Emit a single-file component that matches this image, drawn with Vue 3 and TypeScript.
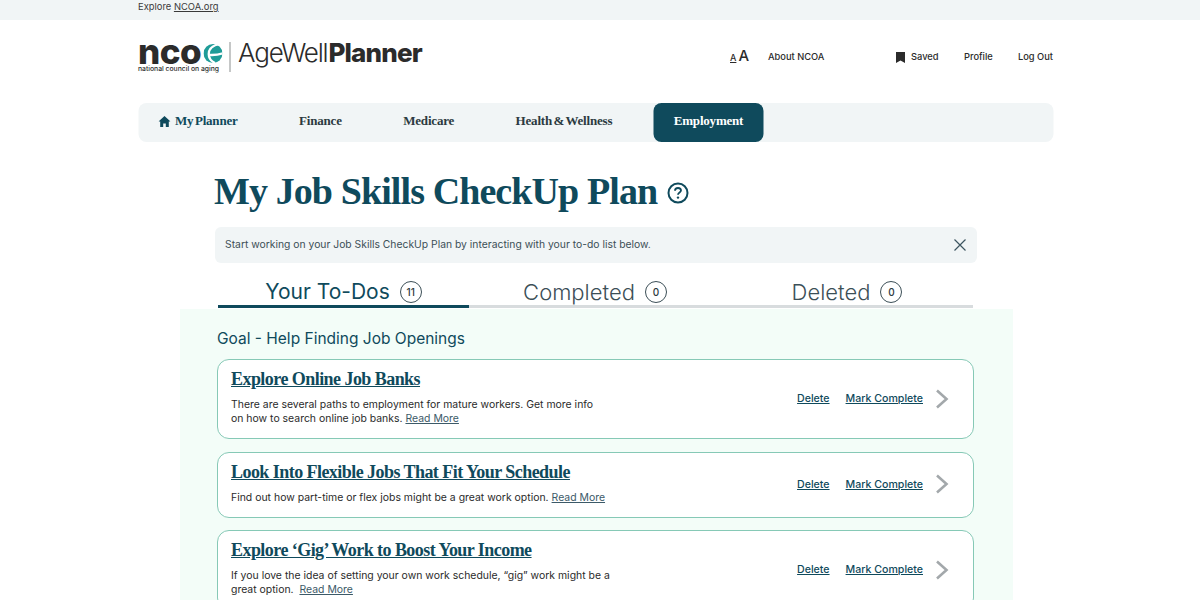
<script setup lang="ts">
interface NavItem {
  label: string;
  home?: boolean;
  active?: boolean;
}

interface Tab {
  label: string;
  count: number;
  active?: boolean;
}

interface Todo {
  title: string;
  lines: string[];
  more: string;
}

const navItems: NavItem[] = [
  { label: 'My Planner', home: true },
  { label: 'Finance' },
  { label: 'Medicare' },
  { label: 'Health & Wellness' },
  { label: 'Employment', active: true }
];

const tabs: Tab[] = [
  { label: 'Your To-Dos', count: 11, active: true },
  { label: 'Completed', count: 0 },
  { label: 'Deleted', count: 0 }
];

const todos: Todo[] = [
  {
    title: 'Explore Online Job Banks',
    lines: ['There are several paths to employment for mature workers. Get more info', 'on how to search online job banks.'],
    more: 'Read More'
  },
  {
    title: 'Look Into Flexible Jobs That Fit Your Schedule',
    lines: ['Find out how part-time or flex jobs might be a great work option.'],
    more: 'Read More'
  },
  {
    title: 'Explore ‘Gig’ Work to Boost Your Income',
    lines: ['If you love the idea of setting your own work schedule, “gig” work might be a', 'great option.\u00a0'],
    more: 'Read More'
  }
];
</script>

<template>
  <div class="page">
    <div class="topbar">
      <div class="wrap">Explore <a class="toplink">NCOA.org</a></div>
    </div>

    <header class="wrap header">
      <div class="logo">
        <div class="logo-ncoa">
          <div class="logo-mark">
            <span class="logo-nco">nco</span>
            <svg class="logo-swirl" viewBox="0 0 20 20" width="19" height="19">
              <circle cx="10" cy="10" r="10" fill="#1f9c98" />
              <path d="M17 0C10 1.500 5.500 5 5.500 10.500S8 18 12 20" fill="none" stroke="#fff" stroke-width="2.400" />
              <path d="M6 11.500C10 11.800 15 11.500 20.500 9.800" fill="none" stroke="#fff" stroke-width="2.600" />
            </svg>
          </div>
          <div class="logo-sub">national council on aging</div>
        </div>
        <span class="logo-rule"></span>
        <div class="logo-product"><span class="age">AgeWell</span><b>Planner</b></div>
      </div>

      <div class="utility">
        <span class="font-size"><span class="small-a">A</span><span class="big-a">A</span></span>
        <span class="about">About NCOA</span>
        <span class="saved">
          <svg viewBox="0 0 10 11" width="10" height="11"><path d="M.5 0H9.500V11L5 8.500.5 11Z" fill="#2b2b2b" /></svg>
          Saved
        </span>
        <span class="profile">Profile</span>
        <span class="logout">Log Out</span>
      </div>
    </header>

    <nav class="wrap nav">
      <a v-for="item in navItems" :key="item.label" class="nav-item" :class="{ active: item.active, home: item.home }">
        <svg v-if="item.home" viewBox="0 0 12 11" width="12" height="11">
          <path d="M6 0 12 5.500H10.300V11H7.300V7.500H4.700V11H1.700V5.500H0Z" fill="#0f4a5c" />
        </svg>
        <span>{{ item.label }}</span>
      </a>
    </nav>

    <h1 class="title">
      <span>My Job Skills CheckUp Plan</span>
      <svg viewBox="0 0 22 22" width="22" height="22" class="help">
        <circle cx="11" cy="11" r="9.500" fill="none" stroke="#0f4a5c" stroke-width="2" />
        <path d="M8 8.700C8 7 9.300 6 11 6S14 7 14 8.600C14 10.500 11 10.600 11 12.700" fill="none" stroke="#0f4a5c" stroke-width="1.800" />
        <circle cx="11" cy="15.600" r="1.200" fill="#0f4a5c" />
      </svg>
    </h1>

    <div class="notice">
      <span>Start working on your Job Skills CheckUp Plan by interacting with your to-do list below.</span>
      <svg viewBox="0 0 12 12" width="12" height="12">
        <path d="M.5.500 11.500 11.500M11.500.500 .5 11.500" stroke="#3d5560" stroke-width="1.200" fill="none" />
      </svg>
    </div>

    <div class="tabs">
      <div v-for="tab in tabs" :key="tab.label" class="tab" :class="{ active: tab.active }">
        <span class="tab-label">{{ tab.label }}</span>
        <span class="tab-count">{{ tab.count }}</span>
      </div>
    </div>

    <section class="panel">
      <h2 class="goal">Goal - Help Finding Job Openings</h2>
      <article v-for="todo in todos" :key="todo.title" class="card">
        <div class="card-body">
          <a class="card-title">{{ todo.title }}</a>
          <p class="card-text">
            <template v-for="(line, i) in todo.lines" :key="i">
              {{ line }}<br v-if="i < todo.lines.length - 1" />
            </template>
            {{ ' ' }}<a class="more">{{ todo.more }}</a>
          </p>
        </div>
        <div class="card-actions">
          <a class="delete">Delete</a>
          <a class="complete">Mark Complete</a>
          <svg viewBox="0 0 14 20" width="14" height="20">
            <path d="M2 1.500 11.500 10 2 18.500" fill="none" stroke="#a3a8ab" stroke-width="2.600" />
          </svg>
        </div>
      </article>
    </section>
  </div>
</template>

<style>
html,
body {
  margin: 0;
  background: #fff;
  overflow: hidden;
}
</style>

<style scoped>
.page {
  height: 600px;
  overflow: hidden;
  font-family: Inter, "Noto Sans", sans-serif;
  color: #2b2b2b;
}

.wrap {
  width: 915px;
  margin: 0 auto;
  box-sizing: border-box;
  transform: translateX(-4.500px);
}

.topbar {
  height: 20px;
  background: #f1f5f6;
  font-size: 9.400px;
  line-height: 13px;
  color: #3a3a3a;
}

.toplink {
  text-decoration: underline;
}

.header {
  height: 83px;
  display: flex;
  justify-content: space-between;
  align-items: flex-start;
}

.logo {
  display: flex;
  align-items: flex-start;
  padding-top: 22px;
}

.logo-ncoa {
  width: 82px;
}

.logo-mark {
  display: flex;
  align-items: center;
  height: 22px;
}

.logo-nco {
  font-size: 35px;
  line-height: 22px;
  font-weight: 800;
  letter-spacing: -0.500px;
  color: #2b2b2b;
  transform: translateY(-2px);
}

.logo-swirl {
  margin-left: 2px;
  flex-shrink: 0;
}

.logo-sub {
  font-size: 6.800px;
  line-height: 8px;
  margin-top: 1px;
  font-weight: 500;
  white-space: nowrap;
}

.logo-rule {
  width: 1px;
  height: 30px;
  background: #8b8f90;
  margin: 0 8px 0 9px;
}

.logo-product {
  font-size: 26px;
  line-height: 22px;
  letter-spacing: -1.200px;
  white-space: nowrap;
}

.logo-product .age {
  font-weight: 300;
}

.logo-product b {
  font-weight: 800;
  margin-left: 1px;
  letter-spacing: -0.800px;
}

.utility {
  display: flex;
  align-items: center;
  font-size: 9.300px;
  font-weight: 500;
  line-height: 14px;
  padding-top: 29px;
}

.font-size {
  display: flex;
  align-items: baseline;
  gap: 2px;
  width: 38px;
}

.small-a {
  font-size: 9px;
  text-decoration: underline;
}

.big-a {
  font-size: 15px;
}

.about {
  width: 127px;
}

.saved {
  display: flex;
  align-items: center;
  gap: 6px;
  width: 69px;
}

.profile {
  width: 54px;
}

.nav {
  height: 39px;
  background: #f1f5f6;
  border-radius: 8px;
  display: flex;
  align-items: stretch;
  padding-left: 20px;
  font-family: "Liberation Serif", serif;
  font-size: 13px;
  font-weight: 700;
  letter-spacing: -0.200px;
  word-spacing: -1.500px;
}

.nav-item {
  display: flex;
  align-items: center;
  gap: 5px;
  margin-right: 61.500px;
  padding-bottom: 3px;
  color: #2c3a40;
  white-space: nowrap;
}

.nav-item.home {
  color: #0f4a5c;
}

.nav-item.active {
  margin: 0 0 0 -20px;
  padding: 0 20px 3px;
  border-radius: 8px;
  background: #0f4a5c;
  color: #fff;
}

.title {
  margin: 20px 0 0 214px;
  height: 65px;
  padding-bottom: 8px;
  box-sizing: border-box;
  display: flex;
  align-items: center;
  gap: 10px;
  font-family: "Liberation Serif", serif;
  font-size: 38px;
  line-height: 44px;
  font-weight: 700;
  letter-spacing: -0.900px;
  color: #0f4a5c;
  white-space: nowrap;
}

.help {
  margin-top: 4px;
}

.notice {
  width: 762px;
  height: 36px;
  margin: 0 0 0 215px;
  box-sizing: border-box;
  padding: 0 11px 0 10px;
  background: #f1f5f6;
  border-radius: 6px;
  display: flex;
  align-items: center;
  justify-content: space-between;
  font-size: 10.350px;
  color: #3c4f57;
}

.notice span {
  padding-bottom: 3px;
}

.tabs {
  width: 755px;
  height: 45px;
  margin: 0 0 0 218px;
  display: grid;
  grid-template-columns: 251px 1fr 252px;
}

.tab {
  display: flex;
  align-items: center;
  justify-content: center;
  gap: 10px;
  box-sizing: border-box;
  padding-top: 15px;
  border-bottom: 3px solid #d8dcde;
  font-size: 22px;
  font-weight: 300;
  color: #3c4f57;
}

.tab.active {
  border-bottom-color: #0f4a5c;
  color: #0f4a5c;
  font-size: 21px;
  font-weight: 400;
}

.tab-count {
  width: 20px;
  height: 20px;
  border: 1px solid #3c4f57;
  border-radius: 50%;
  display: flex;
  align-items: center;
  justify-content: center;
  font-size: 10px;
  font-weight: 500;
  color: #2c3a40;
}

.panel {
  width: 833px;
  margin: 1px 0 0 180px;
  padding: 0 39px 0 37px;
  box-sizing: border-box;
  height: 320px;
  background: #f3fdf8;
}

.goal {
  margin: 0;
  height: 50px;
  padding-top: 19px;
  box-sizing: border-box;
  font-size: 15.500px;
  line-height: 22px;
  font-weight: 400;
  color: #0f4a5c;
}

.card {
  display: flex;
  justify-content: space-between;
  align-items: center;
  box-sizing: border-box;
  padding: 7px 24px 9px 13px;
  margin-bottom: 12.500px;
  background: #fff;
  border: 1px solid #86c9b6;
  border-radius: 12px;
}

.card-title {
  display: block;
  font-family: "Liberation Serif", serif;
  font-size: 18px;
  line-height: 24px;
  font-weight: 700;
  letter-spacing: -0.550px;
  color: #0f4a5c;
  text-decoration: underline;
}

.card-text {
  margin: 7px 0 3px;
  font-size: 10.450px;
  line-height: 14px;
  color: #2b2b2b;
  white-space: nowrap;
}

.more {
  color: #3c5a68;
  text-decoration: underline;
}

.card-actions {
  display: flex;
  align-items: center;
  padding-top: 1px;
  font-size: 10.600px;
  font-weight: 500;
  color: #0f4a5c;
}

.delete {
  margin-right: 16px;
  text-decoration: underline;
}

.complete {
  margin-right: 12px;
  text-decoration: underline;
}
</style>
